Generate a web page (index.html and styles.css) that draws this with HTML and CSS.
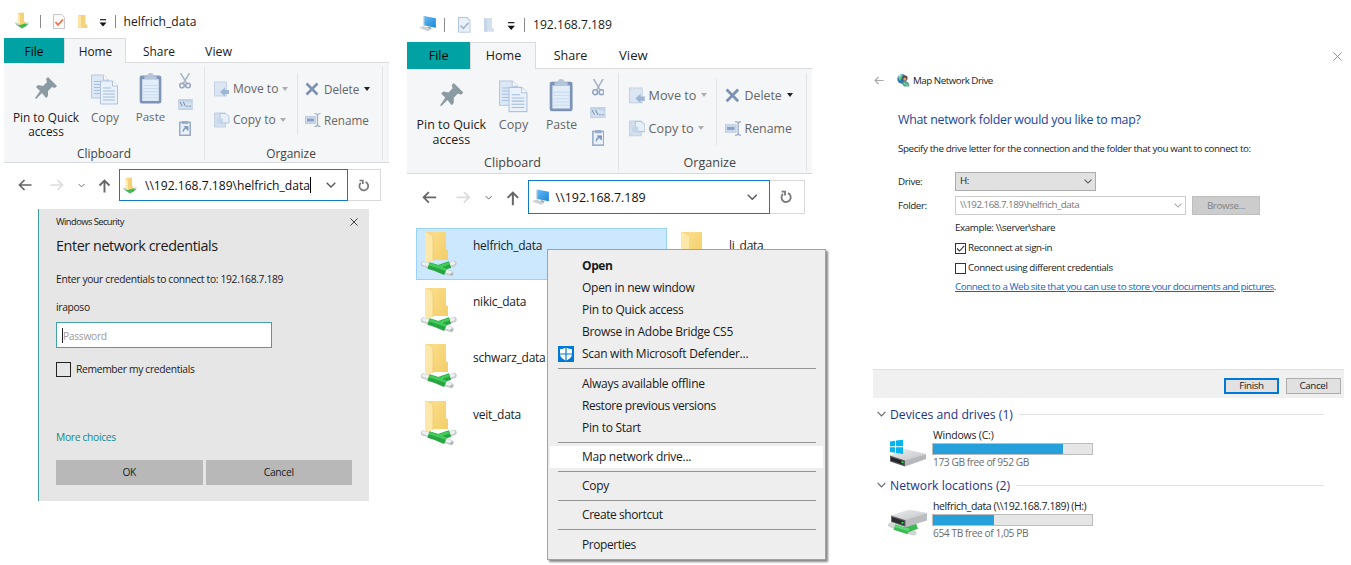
FILE: index.html
```
<!DOCTYPE html>
<html lang="en">
<head>
<meta charset="utf-8">
<title>Map network drive</title>
<link rel="stylesheet" href="styles.css">
</head>
<body>
<svg class="defs" aria-hidden="true">
  <defs>
    <linearGradient id="gold" x1="0" y1="0" x2="1" y2="1"><stop offset="0" stop-color="#fbdf8c"/><stop offset="1" stop-color="#f3cd68"/></linearGradient>
    <linearGradient id="metal" x1="0" y1="0" x2="1" y2="1"><stop offset="0" stop-color="#eeeeef"/><stop offset="1" stop-color="#c2c3c6"/></linearGradient>
    <linearGradient id="screen" x1="0" y1="0" x2="1" y2="1"><stop offset="0" stop-color="#63bdf5"/><stop offset="1" stop-color="#1d84d8"/></linearGradient>
  </defs>
  <symbol id="pin" viewBox="0 0 24 24"><path d="M14 1 23 10 21 12 18 11 14 15 14 20 12 22 8 17 2 23 1 22 6 15 2 11 4 9 9 10 13 6 12 3Z" fill="#8c9aa3"/></symbol>
  <symbol id="copy" viewBox="0 0 28 30">
    <path d="M.5.5h12l5 5v18h-17Z" fill="#dce8f6" stroke="#b6c7df"/><path d="M12.500.5v5h5" fill="#fff" stroke="#b6c7df"/><path d="M3 7h8M3 10h11M3 13h11M3 16h11M3 19h11" stroke="#a9bfdd"/>
    <path d="M9.500 6.500h12l5 5v18h-17Z" fill="#e9f1fb" stroke="#b0c3de"/><path d="M21.500 6.500v5h5" fill="#fff" stroke="#b0c3de"/><path d="M12 13.500h8M12 16.500h12M12 19.500h12M12 22.500h12M12 25.500h12" stroke="#a4bbdb"/>
  </symbol>
  <symbol id="paste" viewBox="0 0 22 31"><rect x="1" y="4" width="20" height="26" rx="1.500" fill="#7f95b8" stroke="#7a90b5"/><path d="M3 7h16v21H3Z" fill="#e1edf8"/><path d="M3 13h16M3 16h16M3 19h16M3 22h16M3 25h16" stroke="#cbdcef"/><path d="M5 7V4h3q0-3 3-3t3 3h3v3Z" fill="#b4c5dc"/></symbol>
  <symbol id="cut" viewBox="0 0 12 16"><path d="M1.500 0 7.500 10M10.500 0 4.500 10" stroke="#a9b6c8" stroke-width="1.500" fill="none"/><circle cx="3" cy="12.500" r="2.300" fill="none" stroke="#92a5c2" stroke-width="1.500"/><circle cx="9" cy="12.500" r="2.300" fill="none" stroke="#92a5c2" stroke-width="1.500"/></symbol>
  <symbol id="copypath" viewBox="0 0 16 12"><path d="M0 0h16v12H0Z" fill="#c2d3e8"/><path d="M1.500 2v8h13V4" fill="#d4e1f0"/><path d="m2 3 2.500 5M5.500 3 8 8M9 8h2M12 8h2" stroke="#7c93b7" stroke-width="1.100"/></symbol>
  <symbol id="pasteshort" viewBox="0 0 12 16"><rect x=".8" y="2.300" width="10.400" height="13" fill="#e8f0fa" stroke="#93a6c4" stroke-width="1.400"/><path d="M3 1h6v3H3Z" fill="#9aaeca"/><path d="M4 12q-.5-4 3-4M5 6.500h4v4Z" fill="#7d94b8" stroke="#7d94b8" stroke-width=".7"/></symbol>
  <symbol id="moveto" viewBox="0 0 16 16"><path d="M.5 1h12v14H.5Z" fill="#dbe6f2" stroke="#c3d1e3"/><path d="m15 9-4 0v-2.500L6 11l5 4.500V13h4Z" fill="#9fb5d5"/></symbol>
  <symbol id="copyto" viewBox="0 0 16 16"><path d="M.5 1h11v14H.5Z" fill="#d3dfed" stroke="#c3d1e3"/><path d="M6 1.500h6l3 3V11H6Z" fill="#e7eff8" stroke="#b5c6dd"/><path d="M3 6.500h6v5H3Z" fill="#c5d6e9"/></symbol>
  <symbol id="del" viewBox="0 0 14 14"><path d="m1.500 1.500 11 11m0-11-11 11" stroke="#7d91b3" stroke-width="2.600"/></symbol>
  <symbol id="rename" viewBox="0 0 16 14"><path d="M.5 3.500h10v7H.5Z" fill="#cfdcec" stroke="#bccbdf"/><path d="M2 5.500h7v3H2Z" fill="#8ba2c6"/><path d="M9.500.5q3 0 3 2v9q0 2-3 2M15.500.5q-3 0-3 2v9q0 2 3 2" stroke="#9badc8" fill="none" stroke-width="1.200"/></symbol>
  <symbol id="back" viewBox="0 0 14 12"><path d="M13.500 6H1.500M6.500 1l-5 5 5 5" fill="none" stroke="currentColor" stroke-width="1.700"/></symbol>
  <symbol id="up" viewBox="0 0 12 14"><path d="M6 13.500V1.500M1 6.500l5-5 5 5" fill="none" stroke="currentColor" stroke-width="1.900"/></symbol>
  <symbol id="chev" viewBox="0 0 10 6"><path d="m.7.7 4.300 4.300L9.300.7" fill="none" stroke="currentColor" stroke-width="1.300"/></symbol>
  <symbol id="refresh" viewBox="0 0 12 13"><path d="M2.800 3.800A4.400 4.400 0 1 0 7.600 3M1.500 1.500h3.300v3.600" fill="none" stroke="#777" stroke-width="1.700"/></symbol>
  <symbol id="qat" viewBox="0 0 8 8"><path d="M1 .7h6" stroke="#222" stroke-width="1.200"/><path d="M.5 3.500h7L4 7.500Z" fill="#111"/></symbol>
  <symbol id="share-mini" viewBox="0 0 14 17"><path d="M3 1 9 .5V9l1.500 1v4H3Z" fill="#f5d279"/><path d="M2.500 1 5 3v11l-2.500-2Z" fill="#fdebaf"/><path d="M1 11.500 5 13l6-1.800 2.500.5-2.500 2.500-4 2.300-5-3.200Z" fill="#3fb955"/><path d="M0 11.500 2 11.500l2 1.500M11 11.500l2.500-.5" stroke="#c9d8ca" stroke-width="1.500"/></symbol>
  <symbol id="folder-mini" viewBox="0 0 11 15"><path d="M1 1h7.500v9l2 1v3H1Z" fill="#f5d37c"/><path d="m1 1 3 1.500V14.500L1 13Z" fill="#fbe6a8"/></symbol>
  <symbol id="folder-off" viewBox="0 0 11 15"><path d="M1 1h7.500v9l2 1v3H1Z" fill="#d4e0ee"/><path d="m1 1 3 1.500V14.500L1 13Z" fill="#c6d4e7"/></symbol>
  <symbol id="check-on" viewBox="0 0 12 15"><path d="M.5.5h8l3 3v11H.5Z" fill="#fafafa" stroke="#c5c7cb"/><path d="m2.500 8 2.500 3 5-5.500" fill="none" stroke="#ef7040" stroke-width="1.700"/></symbol>
  <symbol id="check-off" viewBox="0 0 12 15"><path d="M.5.5h8l3 3v11H.5Z" fill="#e9f0f9" stroke="#b5c5da"/><path d="m2.500 8 2.500 3 5-5.500" fill="none" stroke="#9fb4d2" stroke-width="1.500"/></symbol>
  <symbol id="pc" viewBox="0 0 17 16"><path d="m5 1 11 2v9L5 10Z" fill="url(#screen)"/><path d="m5 1-.7.4V10l.7.3Z" fill="#9db0bd"/><path d="m9 11 3 1-1 2-4-1Z" fill="#9aa4ab"/><path d="m0 12 4-1.500 8 3L8.500 15.500Z" fill="#ccd1d5"/></symbol>
  <symbol id="netfolder" viewBox="0 0 36 46">
    <path d="M8 1h17v17l2 1.500V29H8Z" fill="url(#gold)"/><path d="m4 1 8 4v25l-5 2-3-2Z" fill="#fde8a9"/><path d="M4 1h8v4Z" fill="#f7d783"/><path d="M12 5v25" stroke="#edc768" stroke-width=".7"/>
    <path d="m2.500 33 6 2M28 34.500l5-2M24 40.500l6 2" stroke="#c6cccd" stroke-width="5.500" stroke-linecap="round"/>
    <path d="m2.500 32.500 5 1.500M30 33l2.500-1M26 40.500l3.500 1.200" stroke="#eef1f1" stroke-width="3" stroke-linecap="round"/>
    <path d="m7.500 34.500 8 2.500 9 3.800M16 38 29 33.500" stroke="#27a540" stroke-width="7"/><path d="m8 33 9 2.800 8 3M17 36l11-3.800" stroke="#42cc5a" stroke-width="2.800" fill="none"/><circle cx="30.500" cy="43" r="1.200" fill="#a9afb0"/>
  </symbol>
  <symbol id="plainfolder" viewBox="0 0 36 46"><path d="M8 1h17v30H8Z" fill="url(#gold)"/><path d="m4 1 8 4v25l-8-4Z" fill="#fde8a9"/><path d="M4 1h8v4Z" fill="#f7d783"/></symbol>
  <symbol id="shield" viewBox="0 0 16 16"><path d="M0 0h16v16H0Z" fill="#0078d7"/><path d="M8 1.500q3 1.700 6 1.700V8q0 4-6 6.700Q2 12 2 8V3.200q3 0 6-1.700Z" fill="#fff"/><path d="M8 1v14M1.500 8h13" stroke="#0078d7" stroke-width="1.200"/></symbol>
  <symbol id="globe" viewBox="0 0 13 13"><circle cx="5" cy="5" r="4.700" fill="#2a72ba"/><path d="M1 3.500Q3 0 6 1L4.500 4 3 7Z" fill="#6fcd70"/><path d="M1.500 2 4 1" stroke="#b9e7f7" stroke-width="1.400"/><circle cx="8" cy="4" r="2.600" fill="#664635"/><circle cx="7.800" cy="5" r="1.500" fill="#dda57c"/><path d="M5 10q1-4 4-3t3 4l.7 1.500H7Z" fill="#57a588"/><path d="m7 9 4 3" stroke="#a8d5c0"/></symbol>
  <symbol id="drive-c" viewBox="0 0 37 28"><path d="m1 16.500 15-6.500 21 5-21 7Z" fill="url(#metal)"/><path d="m16 21.500 21-6.500V20l-21 7.500Z" fill="#b7b8bb"/><path d="m1 16.500 15 5v6L1 22.500Z" fill="#58595b"/><path d="m2 18.200 12.500 4v3.500L2 21.500Z" fill="#242527"/><path d="m12.500 23 2 .6" stroke="#3ddf56" stroke-width="1.700"/><path d="M1 2.500 6 1.800v5.500H1ZM7 1.600 14 .7v6.600H7ZM1 8.300h5v5.500L1 13ZM7 8.300h7V15l-7-1Z" fill="#06b4ee"/></symbol>
  <symbol id="drive-n" viewBox="0 0 40 28"><path d="m2.500 17 5 2M20 23.500l6 1.500" stroke="#d0d4d5" stroke-width="5" stroke-linecap="round"/><path d="m6.500 19 14 4.500M18 22l11-4" stroke="#3cba52" stroke-width="6"/><path d="m7 18 14 4" stroke="#5fd874" stroke-width="2.500"/><path d="m3 7.500 18-6L39 5l-21 7Z" fill="url(#metal)"/><path d="m17 12 22-7v7.500l-22 7Z" fill="#bcbdc0"/><path d="m3 7.500 14.500 4.500V19L3 14Z" fill="#6a6b6e"/><path d="m4 9 12.500 4v4.500L4 13.500Z" fill="#2c2d2f"/><path d="m13.500 14.500 2 .6" stroke="#3ddf56" stroke-width="1.700"/></symbol>
</svg>

<main class="board">
  <section class="col col-credentials">
    <div class="explorer">
      <header class="titlebar">
        <svg class="ti-app"><use href="#share-mini"/></svg><i class="tsep"></i>
        <svg class="ti-check"><use href="#check-on"/></svg><svg class="ti-folder"><use href="#folder-mini"/></svg>
        <svg class="ti-qat"><use href="#qat"/></svg><i class="tsep tsep-b"></i><span class="wtitle">helfrich_data</span>
      </header>
      <nav class="tabs"><span class="tab file">File</span><span class="tab home">Home</span><span class="tab share">Share</span><span class="tab view">View</span></nav>
      <div class="ribbon">
        <div class="group clipboard">
          <div class="tools">
            <div class="big pin"><svg><use href="#pin"/></svg><span>Pin to Quick<br>access</span></div>
            <div class="big cp"><svg><use href="#copy"/></svg><span>Copy</span></div>
            <div class="big ps"><svg><use href="#paste"/></svg><span>Paste</span></div>
            <div class="smalls"><svg class="s-cut"><use href="#cut"/></svg><svg class="s-path"><use href="#copypath"/></svg><svg class="s-short"><use href="#pasteshort"/></svg></div>
          </div>
          <div class="glabel">Clipboard</div>
        </div>
        <div class="group organize">
          <div class="tools">
            <div class="pair left"><div><svg><use href="#moveto"/></svg><span>Move to</span><i class="caret"></i></div><div><svg><use href="#copyto"/></svg><span>Copy to</span><i class="caret"></i></div></div>
            <div class="pair right"><div><svg class="s-del"><use href="#del"/></svg><span>Delete</span><i class="caret dark"></i></div><div><svg><use href="#rename"/></svg><span>Rename</span></div></div>
          </div>
          <div class="glabel">Organize</div>
        </div>
      </div>
      <div class="navrow">
        <svg class="n-back"><use href="#back"/></svg><svg class="n-fwd"><use href="#back"/></svg><svg class="n-rec"><use href="#chev"/></svg><svg class="n-up"><use href="#up"/></svg>
        <div class="address"><svg class="a-share"><use href="#share-mini"/></svg><span class="path caret-end">\\192.168.7.189\helfrich_data</span><svg class="a-chev"><use href="#chev"/></svg></div>
        <div class="reload"><svg><use href="#refresh"/></svg></div>
      </div>
    </div>
    <div class="credentials">
      <div class="cred-top"><span>Windows Security</span><svg class="x" viewBox="0 0 8 8"><path d="m.4.4 7.200 7.200m0-7.200L.4 7.600" stroke="#333" stroke-width=".9"/></svg></div>
      <h1>Enter network credentials</h1>
      <p class="prompt">Enter your credentials to connect to: 192.168.7.189</p>
      <p class="user">iraposo</p>
      <div class="password"><span>Password</span></div>
      <div class="remember"><i></i><span>Remember my credentials</span></div>
      <a class="more">More choices</a>
      <div class="cred-buttons"><span>OK</span><span>Cancel</span></div>
    </div>
  </section>

  <section class="col col-server">
    <div class="explorer large">
      <header class="titlebar">
        <svg class="ti-app pc"><use href="#pc"/></svg><i class="tsep"></i>
        <svg class="ti-check"><use href="#check-off"/></svg><svg class="ti-folder"><use href="#folder-off"/></svg>
        <svg class="ti-qat"><use href="#qat"/></svg><i class="tsep tsep-b"></i><span class="wtitle">192.168.7.189</span>
      </header>
      <nav class="tabs"><span class="tab file">File</span><span class="tab home">Home</span><span class="tab share">Share</span><span class="tab view">View</span></nav>
      <div class="ribbon">
        <div class="group clipboard">
          <div class="tools">
            <div class="big pin"><svg><use href="#pin"/></svg><span>Pin to Quick<br>access</span></div>
            <div class="big cp"><svg><use href="#copy"/></svg><span>Copy</span></div>
            <div class="big ps"><svg><use href="#paste"/></svg><span>Paste</span></div>
            <div class="smalls"><svg class="s-cut"><use href="#cut"/></svg><svg class="s-path"><use href="#copypath"/></svg><svg class="s-short"><use href="#pasteshort"/></svg></div>
          </div>
          <div class="glabel">Clipboard</div>
        </div>
        <div class="group organize">
          <div class="tools">
            <div class="pair left"><div><svg><use href="#moveto"/></svg><span>Move to</span><i class="caret"></i></div><div><svg><use href="#copyto"/></svg><span>Copy to</span><i class="caret"></i></div></div>
            <div class="pair right"><div><svg class="s-del"><use href="#del"/></svg><span>Delete</span><i class="caret dark"></i></div><div><svg><use href="#rename"/></svg><span>Rename</span></div></div>
          </div>
          <div class="glabel">Organize</div>
        </div>
      </div>
      <div class="navrow">
        <svg class="n-back"><use href="#back"/></svg><svg class="n-fwd"><use href="#back"/></svg><svg class="n-rec"><use href="#chev"/></svg><svg class="n-up"><use href="#up"/></svg>
        <div class="address"><svg class="a-pc"><use href="#pc"/></svg><span class="path">\\192.168.7.189</span><svg class="a-chev"><use href="#chev"/></svg></div>
        <div class="reload"><svg><use href="#refresh"/></svg></div>
      </div>
    </div>
    <div class="files">
      <div class="filelist">
        <div class="fileitem selected"><svg><use href="#netfolder"/></svg><span>helfrich_data</span></div>
        <div class="fileitem"><svg><use href="#netfolder"/></svg><span>nikic_data</span></div>
        <div class="fileitem"><svg><use href="#netfolder"/></svg><span>schwarz_data</span></div>
        <div class="fileitem"><svg><use href="#netfolder"/></svg><span>veit_data</span></div>
      </div>
      <div class="filelist second"><div class="fileitem"><svg><use href="#plainfolder"/></svg><span>li_data</span></div></div>
    </div>
    <div class="menu">
      <div class="mi bold">Open</div>
      <div class="mi">Open in new window</div>
      <div class="mi">Pin to Quick access</div>
      <div class="mi">Browse in Adobe Bridge CS5</div>
      <div class="mi"><svg><use href="#shield"/></svg>Scan with Microsoft Defender...</div>
      <hr>
      <div class="mi">Always available offline</div>
      <div class="mi tight">Restore previous versions</div>
      <div class="mi">Pin to Start</div>
      <hr>
      <div class="mi hot">Map network drive...</div>
      <hr>
      <div class="mi">Copy</div>
      <hr>
      <div class="mi tight">Create shortcut</div>
      <hr>
      <div class="mi tight">Properties</div>
    </div>
  </section>

  <section class="col col-map">
    <div class="wizard">
      <div class="wclose"><svg class="x" viewBox="0 0 8 8"><path d="m.4.4 7.200 7.200m0-7.200L.4 7.600" stroke="#888" stroke-width=".8"/></svg></div>
      <div class="whead"><svg class="w-back"><use href="#back"/></svg><svg class="w-globe"><use href="#globe"/></svg><span>Map Network Drive</span></div>
      <h2>What network folder would you like to map?</h2>
      <p class="wtext">Specify the drive letter for the connection and the folder that you want to connect to:</p>
      <div class="wform">
        <label>Drive:</label><div class="field"><div class="combo drive"><span>H:</span><svg><use href="#chev"/></svg></div></div>
        <label>Folder:</label><div class="field"><div class="combo folder"><span>\\192.168.7.189\helfrich_data</span><svg><use href="#chev"/></svg></div><span class="browse">Browse...</span></div>
      </div>
      <div class="wopts">
        <p>Example: \\server\share</p>
        <p class="o1"><i class="cb"><svg viewBox="0 0 9 9"><path d="m1 4.500 2.500 2.500L8.200 1.800" fill="none" stroke="#333" stroke-width="1.100"/></svg></i><span>Reconnect at sign-in</span></p>
        <p class="o2"><i class="cb"></i><span>Connect using different credentials</span></p>
        <p class="o3"><a>Connect to a Web site that you can use to store your documents and pictures</a>.</p>
      </div>
      <footer><span class="finish">Finish</span><span>Cancel</span></footer>
    </div>
    <div class="drives">
      <h3><svg><use href="#chev"/></svg><span>Devices and drives (1)</span><i></i></h3>
      <div class="drive-item"><svg class="d-c"><use href="#drive-c"/></svg><div><p class="name">Windows (C:)</p><div class="bar"><b style="width:81.5%"></b></div><p class="free">173 GB free of 952 GB</p></div></div>
      <h3><svg><use href="#chev"/></svg><span>Network locations (2)</span><i></i></h3>
      <div class="drive-item"><svg class="d-n"><use href="#drive-n"/></svg><div><p class="name net">helfrich_data (\\192.168.7.189) (H:)</p><div class="bar"><b style="width:38.5%"></b></div><p class="free">654 TB free of 1,05 PB</p></div></div>
    </div>
  </section>
</main>
</body>
</html>
```
FILE: styles.css
```
* { box-sizing: border-box; }
body { margin: 0; background: #fff; color: #1b1b1b; font-family: "Open Sans", "Noto Sans", sans-serif; overflow: hidden; }
p, h1, h2, h3 { margin: 0; font-weight: 400; }
svg { flex: none; display: block; }
.defs { width: 0; height: 0; position: absolute; }
.board { display: flex; width: 1351px; height: 565px; overflow: hidden; }
.col { flex: none; }
.col-credentials { width: 385px; margin-left: 4px; }
.col-server { width: 405px; margin-left: 18px; position: relative; }
.col-map { width: 471px; margin-left: 61px; }

/* Explorer window */
.explorer { width: 385px; font-size: 11.9px; white-space: nowrap; }
.explorer.large { zoom: 1.055; width: 384px; padding-top: 2px; }
.titlebar { height: 38px; padding: 5px 0 0 11px; display: flex; align-items: center; }
.ti-app { width: 14px; height: 17px; margin-top: -3px; }
.ti-app.pc { width: 17px; height: 16px; margin-right: -3px; }
.tsep { width: 1px; height: 13px; background: #8b8b8b; margin-left: 10.500px; }
.ti-check { width: 12px; height: 15px; margin-left: 12px; }
.ti-folder { width: 11px; height: 15px; margin-left: 12px; }
.ti-qat { width: 8px; height: 8px; margin: 2px 0 0 11px; }
.tsep-b { margin-left: 8px; }
.wtitle { margin-left: 8px; font-size: 12.1px; }
.large .wtitle { font-size: 11.5px; }
.tabs { height: 25px; display: flex; border-bottom: 1px solid #dadbdc; line-height: 27px; }
.large .tabs { line-height: 26px; }
.file { width: 60px; background: #00a2a4; color: #000; text-align: center; height: 25px; }
.home { width: 62px; background: #f5f6f7; border: 1px solid #dadbdc; border-bottom: 0; height: 25px; line-height: 24px; text-align: center; padding-left: 1px; }
.share { margin-left: 17px; width: 62px; }
.view { font-size: 12.4px; }
.ribbon { height: 100px; background: #f5f6f7; border-bottom: 1px solid #d9dadc; display: flex; padding: 4px 0 3px; }
.group { border-right: 1px solid #e2e3e4; height: 93px; }
.clipboard { width: 201px; }
.organize { width: 178px; }
.tools { display: flex; height: 78px; }
.glabel { text-align: center; line-height: 16px; color: #444; }
.organize .glabel { padding-right: 5px; }
.big { text-align: center; line-height: 14px; color: #666; }
.big svg { margin: 0 auto; }
.big.pin { width: 84px; color: #1b1b1b; font-size: 11.8px; }
.pin svg { width: 24px; height: 24px; margin-top: 9px; margin-bottom: 10px; }
.cp { width: 34px; }
.cp svg { width: 28px; height: 31px; margin-top: 7px; margin-bottom: 5px; }
.ps { width: 57px; font-size: 11.6px; }
.ps svg { width: 23px; height: 32px; margin-top: 5px; margin-bottom: 6px; }
.smalls { width: 16px; margin-left: -2px; display: flex; flex-direction: column; align-items: center; padding-top: 6px; }
.s-cut { width: 12px; height: 16px; }
.s-path { width: 15px; height: 11px; margin-top: 10px; }
.s-short { width: 12px; height: 16px; margin-top: 10px; }
.pair { display: flex; flex-direction: column; color: #666; font-size: 12px; height: 62px; margin-top: 6px; }
.pair > div { display: flex; align-items: center; height: 31px; flex: none; }
.pair svg { width: 16px; height: 16px; margin-right: 3px; }
.left { width: 93px; border-right: 1px solid #e2e3e4; padding: 0 0 0 9px; }
.right { padding-left: 7px; font-size: 11.7px; }
.right svg.s-del { width: 14px; height: 14px; margin: 0 5px 0 0; }
.caret { border: 3px solid transparent; border-top: 4px solid #adadad; border-bottom: 0; margin-left: 4px; }
.caret.dark { border-top-color: #222; margin-left: 5px; }
.navrow { display: flex; align-items: center; height: 32px; margin-top: 6px; color: #666; }
.n-back, .n-fwd { width: 14px; height: 12px; margin-left: 14px; }
.n-fwd { color: #dcdcdc; margin-left: 18px; transform: scaleX(-1); }
.n-rec { width: 7px; height: 5px; margin-left: 14px; stroke-width: 2; }
.n-up { width: 13px; height: 14px; margin: 2px 0 0 13px; }
.address { width: 229px; height: 32px; margin-left: 8px; border: 1.500px solid #1478c8; display: flex; align-items: center; padding: 0 11px 0 3px; color: #111; }
.a-share { width: 14px; height: 17px; margin-right: 8px; }
.a-pc { width: 17px; height: 17px; margin-right: 5px; }
.path { font-size: 12.1px; padding-top: 1px; }
.large .path { font-size: 11.8px; }
.caret-end { border-right: 1px solid #000; line-height: 15px; }
.a-chev { width: 10px; height: 6px; margin-left: auto; color: #555; }
.reload { width: 33px; height: 32px; border: 1px solid #d9d9d9; border-left: 0; display: grid; place-items: center; }
.reload svg { width: 12px; height: 13px; }

/* Credentials prompt */
.credentials { margin: 8px 0 0 34px; width: 331px; height: 292px; background: #e6e6e6; border-left: 1px solid #3e9d9e; padding: 0 16px 0 17px; font-size: 10.300px; letter-spacing: -.33px; display: flex; flex-direction: column; white-space: nowrap; }
.cred-top { display: flex; justify-content: space-between; align-items: center; height: 25px; font-size: 9.4px; letter-spacing: -.58px; }
.cred-top .x { width: 8px; height: 8px; margin-right: -5px; }
.credentials h1 { font-size: 14.400px; letter-spacing: -.43px; line-height: 24px; }
.prompt { line-height: 16px; margin-top: 13px; }
.user { line-height: 16px; margin-top: 12px; }
.password { width: 216px; height: 26px; margin-top: 7px; border: 1.500px solid #42a3a4; background: #fff; color: #9c9c9c; padding: 5px 0 0 5px; }
.password span { display: block; border-left: 1px solid #222; line-height: 16px; height: 15px; }
.remember { display: flex; align-items: center; height: 16px; margin-top: 13px; }
.remember i { width: 15px; height: 15px; border: 1.500px solid #222; margin-right: 5px; }
.more { color: #14898b; line-height: 16px; margin-top: 52px; }
.cred-buttons { display: grid; grid-template-columns: 1fr 1fr; gap: 3px; margin: 15px 0 0; width: 296px; }
.cred-buttons span { background: #b8b8b8; height: 25px; line-height: 25px; text-align: center; }

/* Server share list */
.files { display: flex; padding: 14px 0 0 9px; font-size: 12px; letter-spacing: -.25px; white-space: nowrap; }
.filelist { width: 251px; flex: none; }
.second { margin-left: 5px; width: 110px; }
.fileitem { height: 52px; margin-bottom: 4.200px; border: 1px solid transparent; display: flex; padding: 0 0 0 4px; line-height: 16px; }
.fileitem svg { width: 36px; height: 46px; margin-top: 2px; }
.fileitem span { margin: 9px 0 0 16px; }
.selected { background: #cce8ff; border-color: #99d1ff; }
.menu { position: absolute; left: 140px; top: 249px; width: 279px; height: 311px; background: #eee; border: 1px solid #a2a2a2; padding: 5px 2px 3px; box-shadow: 2px 2px 2px #888; font-size: 12px; letter-spacing: -.27px; white-space: nowrap; }
.mi { height: 22.100px; line-height: 22px; padding-left: 32px; display: flex; align-items: center; }
.mi svg { width: 16px; height: 16px; margin: 0 8px 0 -24px; }
.mi.bold { font-weight: 700; letter-spacing: -.4px; }
.mi.tight { letter-spacing: -.42px; }
.mi.hot { background: #fff; }
.menu hr { height: 1px; border: 0; background: #949494; margin: 3px 7px 3.100px 8px; }

/* Map Network Drive wizard */
.wizard { font-size: 9.800px; letter-spacing: -.39px; padding-top: 49px; height: 398px; display: flex; flex-direction: column; white-space: nowrap; }
.wclose { display: flex; justify-content: flex-end; padding-right: 2px; height: 15px; align-items: center; }
.wclose .x { width: 9px; height: 9px; }
.whead { display: flex; align-items: center; height: 16px; margin-top: 8px; }
.whead span { letter-spacing: -.5px; }
.w-back { width: 10px; height: 9px; color: #aaa; margin-left: 1px; }
.w-globe { width: 13px; height: 13px; margin: 0 3px 0 13px; }
.wizard h2 { color: #1c449c; font-size: 12.400px; letter-spacing: -.28px; line-height: 20px; margin: 22px 0 0 25px; }
.wtext { line-height: 14px; margin: 12px 0 0 25px; }
.wform { display: grid; grid-template-columns: 57px 1fr; row-gap: 5px; margin: 16px 0 0 25px; align-items: center; }
.field { display: flex; align-items: center; }
.combo { display: flex; justify-content: space-between; align-items: center; height: 19px; border: 1px solid #adadad; padding: 0 3px 2px 4px; }
.combo svg { width: 8px; height: 5px; color: #555; margin-top: 2px; }
.drive { width: 141px; background: #e1e1e1; }
.folder { width: 231px; border-color: #ccc; color: #777; letter-spacing: -.5px; }
.folder svg { color: #aaa; }
.browse { margin-left: 6px; width: 68px; height: 19px; line-height: 18px; background: #ccc; border: 1px solid #bfbfbf; color: #828282; text-align: center; }
.wopts { margin: 5px 0 0 82px; line-height: 14px; padding-top: 1px; }
.wopts p { display: flex; align-items: center; }
.wopts .o1 { margin-top: 6px; }
.wopts .o2 { margin-top: 6px; letter-spacing: -.43px; }
.wopts .o3 { margin-top: 5px; letter-spacing: -.44px; }
.wopts a { color: #0a66cc; text-decoration: underline; text-underline-offset: 1px; }
.cb { width: 11px; height: 11px; border: 1px solid #333; margin-right: 2px; }
.wizard footer { margin-top: auto; height: 29px; background: #f0f0f0; border-top: 1px solid #dfdfdf; display: flex; justify-content: flex-end; align-items: center; gap: 7px; padding: 3px 3px 0 0; }
footer span { width: 55px; height: 16px; line-height: 14px; border: 1px solid #adadad; background: #e1e1e1; text-align: center; }
footer .finish { border: 2px solid #0078d7; line-height: 12px; }

/* Drive overview */
.drives { padding-top: 6px; white-space: nowrap; }
.drives h3 { display: flex; align-items: center; height: 20px; font-size: 12.200px; color: #1e3287; }
.drives h3 svg { width: 9px; height: 6px; margin: 0 4px 0 4px; color: #666; }
.drives h3 i { flex: 1; height: 1px; background: #e2e2e2; margin: 0 20px 0 6px; }
.drive-item { display: flex; height: 51px; padding-top: 3px; }
.drive-item > svg { width: 37px; height: 28px; margin: 12px 6px 0 16px; }
.drive-item > svg.d-n { width: 40px; margin: 10px 4px 0 15px; }
.name { font-size: 10.500px; letter-spacing: -.2px; line-height: 16px; padding-left: 1px; }
.name.net { letter-spacing: -.4px; }
.bar { width: 161px; height: 12px; background: #e6e6e6; border: 1px solid #bcbcbc; }
.bar b { display: block; height: 10px; background: #26a0da; }
.free { font-size: 10.200px; letter-spacing: -.42px; line-height: 15px; color: #6d6d6d; padding-left: 1px; }
```
